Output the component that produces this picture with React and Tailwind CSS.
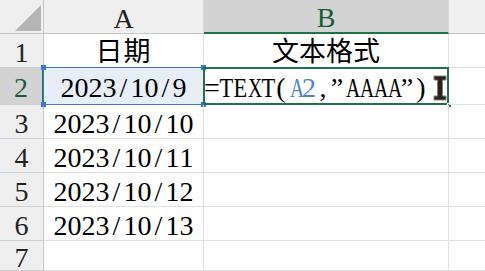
import clsx from 'clsx'

const serif = "font-['Liberation_Serif','Noto_Sans_CJK_SC',serif]"

// Capital letters are wider than the half-width slot, so they get squeezed
const squeeze = {
  T: 'scale-x-[0.8]',
  E: 'scale-x-[0.8]',
  X: 'scale-x-[0.7]',
  A: 'scale-x-[0.7]',
}

// Half-width grid: every ASCII glyph takes the same 14px slot, like a Song-style font
function Half({ text, className }) {
  return (
    <span className={clsx('inline-flex', className)}>
      {[...text].map((ch, i) => (
        <span key={i} className={clsx('inline-block w-[14px] text-center', squeeze[ch])}>
          {ch}
        </span>
      ))}
    </span>
  )
}

function ColHead({ label, selected, last }) {
  return (
    <div
      className={clsx(
        'flex items-center justify-center text-[28px] leading-none pt-1',
        last ? '' : 'border-r border-[#d8d8d8]',
        selected
          ? 'bg-[#d3d3d3] text-[#1d5b36] border-b-2 border-b-[#217346]'
          : 'bg-[#efefef] text-[#222] border-b border-b-[#c6c6c6]'
      )}
    >
      {label}
    </div>
  )
}

function RowHead({ n, selected }) {
  return (
    <div
      className={clsx(
        'flex items-center justify-center text-[28px] leading-none pt-1 border-b border-[#d0d0d0]',
        selected
          ? 'bg-[#d3d3d3] text-[#1d5b36] border-r-2 border-r-[#217346]'
          : 'bg-[#efefef] text-[#222] border-r border-r-[#c6c6c6]'
      )}
    >
      {n}
    </div>
  )
}

function Cell({ children, className }) {
  return (
    <div
      className={clsx(
        'relative flex items-center justify-center border-r border-b border-[#e1e1e1] text-[28px] leading-none pt-1 text-black',
        className
      )}
    >
      {children}
    </div>
  )
}

function Handle({ className }) {
  return <span className={clsx('absolute w-[5px] h-[5px]', className)} />
}

// text cursor hovering at the end of the formula
function IBeam() {
  return (
    <svg width="14" height="26" viewBox="0 0 14 26" className="absolute left-[229px] top-[7px]">
      <path
        d="M1 1h12v4H9.5v16H13v4H1v-4h3.5V5H1z"
        fill="#2a221d"
        stroke="#8d8078"
        strokeWidth="1"
      />
    </svg>
  )
}

const dates = ['2023/10/10', '2023/10/11', '2023/10/12', '2023/10/13']

export default function App() {
  return (
    <div
      className={clsx(
        'w-[485px] h-[271px] overflow-hidden bg-white grid grid-cols-[44px_160px_245px_1fr] grid-rows-[34px_34px_37px_34px_34px_34px_34px_30px]',
        serif
      )}
    >
      {/* corner */}
      <div className="relative bg-[#efefef] border-r border-b border-[#c6c6c6]">
        <svg width="26" height="26" viewBox="0 0 26 26" className="absolute left-[15px] top-[5px]">
          <path d="M26 0V26H0z" fill="#b5b5b5" />
        </svg>
      </div>
      <ColHead label="A" />
      <ColHead label="B" selected />
      <ColHead label="" last />

      <RowHead n="1" />
      <Cell>
        <span className="text-[27px] tracking-[1px]">日期</span>
      </Cell>
      <Cell>
        <span className="text-[27px]">文本格式</span>
      </Cell>
      <Cell className="border-r-0" />

      <RowHead n="2" selected />
      <Cell className="bg-[#e8eef8]">
        <Half text="2023/10/9" />
        <span className="absolute -left-px -top-px -right-px -bottom-px border-[1.5px] border-[#3b78d4]" />
        <Handle className="-left-[3px] -top-[3px] bg-[#3b78d4]" />
        <Handle className="-right-[3px] -top-[3px] bg-[#3b78d4]" />
        <Handle className="-left-[3px] -bottom-[3px] bg-[#3b78d4]" />
        <Handle className="-right-[3px] -bottom-[3px] bg-[#3b78d4]" />
      </Cell>
      <Cell className="justify-start">
        <span className="inline-flex">
          <Half text="=TEXT(" />
          <Half text="A2" className="text-[#4a86c8]" />
          <Half text={',\u201dAAAA\u201d)'} />
        </span>
        <IBeam />
        <span className="absolute -left-px -top-px -right-px -bottom-px border-2 border-[#217346]" />
        <Handle className="-right-[4px] -bottom-[4px] bg-[#217346] border border-white" />
      </Cell>
      <Cell className="border-r-0" />

      {dates.map((d, i) => (
        <div key={d} className="contents">
          <RowHead n={String(i + 3)} />
          <Cell>
            <Half text={d} />
          </Cell>
          <Cell />
          <Cell className="border-r-0" />
        </div>
      ))}

      <RowHead n="7" />
      <Cell />
      <Cell />
      <Cell className="border-r-0" />
    </div>
  )
}
